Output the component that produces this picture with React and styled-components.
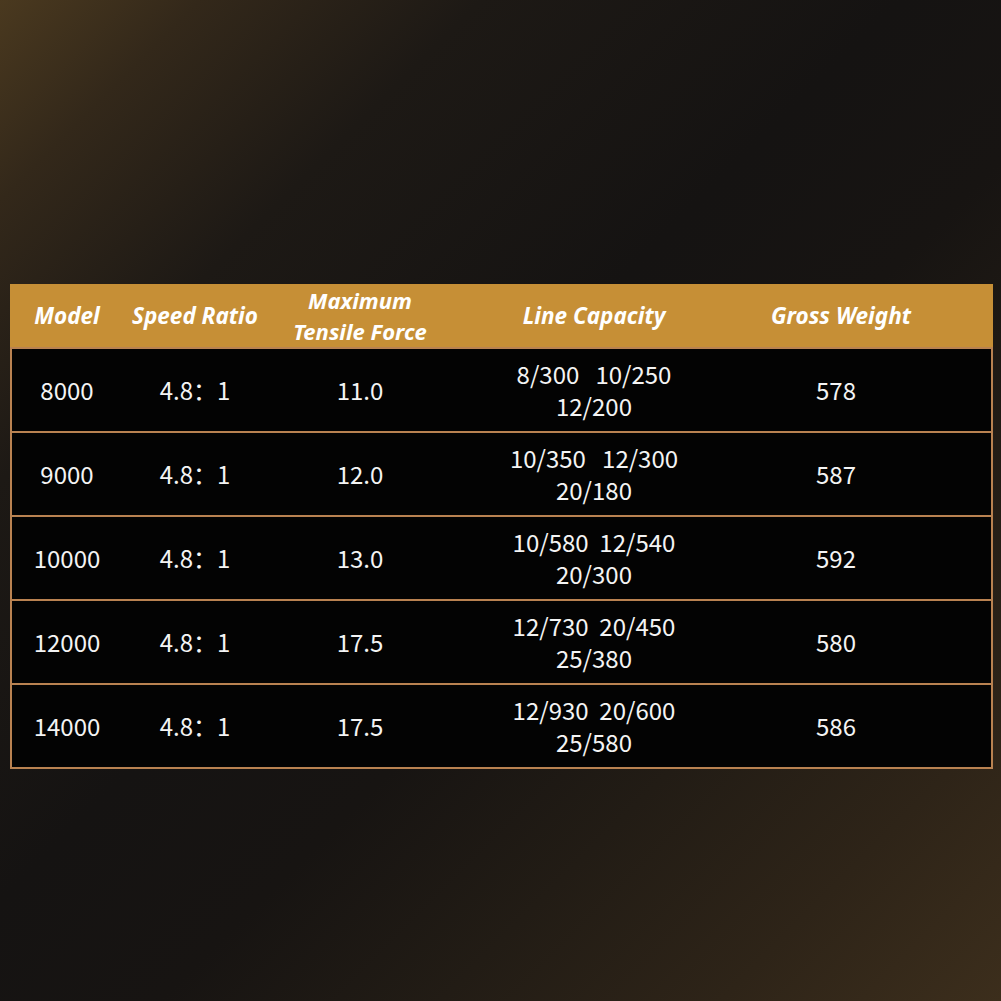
import styled, { createGlobalStyle } from "styled-components";

const GlobalStyle = createGlobalStyle`
  html, body {
    margin: 0;
    padding: 0;
    background: #151312;
  }
`;

const rows = [
  { model: "8000", ratio: "4.8：1", force: "11.0", line: ["8/300   10/250", "12/200"], weight: "578" },
  { model: "9000", ratio: "4.8：1", force: "12.0", line: ["10/350   12/300", "20/180"], weight: "587" },
  { model: "10000", ratio: "4.8：1", force: "13.0", line: ["10/580  12/540", "20/300"], weight: "592" },
  { model: "12000", ratio: "4.8：1", force: "17.5", line: ["12/730  20/450", "25/380"], weight: "580" },
  { model: "14000", ratio: "4.8：1", force: "17.5", line: ["12/930  20/600", "25/580"], weight: "586" },
];

function App() {
  return (
    <>
      <GlobalStyle />
      <Page>
        <Table>
          <HeadRow>
            <HeadCell>Model</HeadCell>
            <HeadCell>Speed Ratio</HeadCell>
            <HeadCell $tight>
              Maximum
              <br />
              Tensile Force
            </HeadCell>
            <HeadCell>Line Capacity</HeadCell>
            <HeadCell $right={-10}>Gross Weight</HeadCell>
          </HeadRow>
          {rows.map((r) => (
            <Row key={r.model}>
              <Cell>{r.model}</Cell>
              <Cell>{r.ratio}</Cell>
              <Cell>{r.force}</Cell>
              <Cell>
                {r.line[0]}
                <br />
                {r.line[1]}
              </Cell>
              <Cell>{r.weight}</Cell>
            </Row>
          ))}
        </Table>
      </Page>
    </>
  );
}
export default App;

const Page = styled.div`
  width: 1001px;
  height: 1001px;
  box-sizing: border-box;
  padding: 284px 8px 0 10px;
  background: linear-gradient(
    135deg,
    #4a391f 0%,
    #33281a 10%,
    #1d1915 24%,
    #151312 45%,
    #171412 58%,
    #221c15 72%,
    #2e2418 86%,
    #3c2e1c 100%
  );
`;

const Table = styled.div`
  width: 983px;
  box-sizing: border-box;
  border: 2px solid #b98251;
  border-top: none;
  background: #030303;
`;

const cols = "110px 146px 184px 284px 200px 1fr";

const HeadRow = styled.div`
  display: grid;
  grid-template-columns: ${cols};
  background: #c68f36;
  margin: 0 -2px;
  padding: 0 2px;
  border-bottom: 2px solid #b98251;
  height: 63px;
`;

const HeadCell = styled.div`
  display: flex;
  align-items: center;
  justify-content: center;
  text-align: center;
  color: #ffffff;
  font-family: "Noto Sans", "Open Sans", sans-serif;
  font-weight: 700;
  font-style: italic;
  font-size: ${(p) => (p.$tight ? "22px" : "22.5px")};
  line-height: ${(p) => (p.$tight ? "30.5px" : "27px")};
  margin-right: ${(p) => p.$right || 0}px;
`;

const Row = styled.div`
  display: grid;
  grid-template-columns: ${cols};
  height: 82px;
  & + & {
    border-top: 2px solid #b98251;
  }
`;

const Cell = styled.div`
  display: flex;
  align-items: center;
  justify-content: center;
  text-align: center;
  color: #f4f4f4;
  font-family: "Noto Sans CJK SC", "Noto Sans", sans-serif;
  font-weight: 400;
  font-size: 24px;
  line-height: 32px;
  white-space: pre;
`;
